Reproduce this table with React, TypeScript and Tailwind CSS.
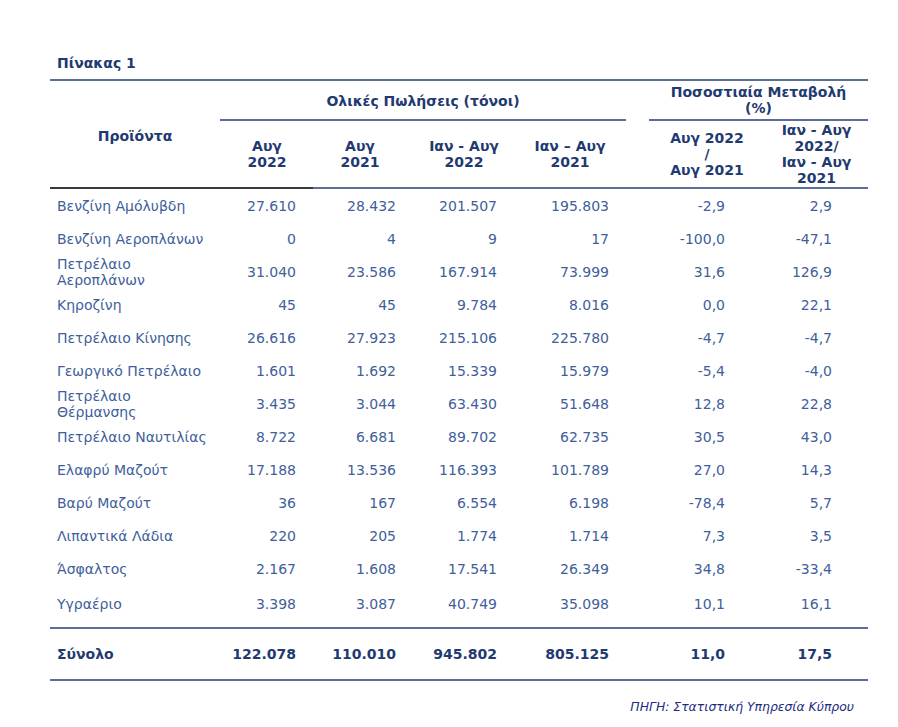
import React from "react";

const rows: { label: string[]; v: string[] }[] = [
  { label: ["Βενζίνη Αμόλυβδη"], v: ["27.610", "28.432", "201.507", "195.803", "-2,9", "2,9"] },
  { label: ["Βενζίνη Αεροπλάνων"], v: ["0", "4", "9", "17", "-100,0", "-47,1"] },
  { label: ["Πετρέλαιο", "Αεροπλάνων"], v: ["31.040", "23.586", "167.914", "73.999", "31,6", "126,9"] },
  { label: ["Κηροζίνη"], v: ["45", "45", "9.784", "8.016", "0,0", "22,1"] },
  { label: ["Πετρέλαιο Κίνησης"], v: ["26.616", "27.923", "215.106", "225.780", "-4,7", "-4,7"] },
  { label: ["Γεωργικό Πετρέλαιο"], v: ["1.601", "1.692", "15.339", "15.979", "-5,4", "-4,0"] },
  { label: ["Πετρέλαιο", "Θέρμανσης"], v: ["3.435", "3.044", "63.430", "51.648", "12,8", "22,8"] },
  { label: ["Πετρέλαιο Ναυτιλίας"], v: ["8.722", "6.681", "89.702", "62.735", "30,5", "43,0"] },
  { label: ["Ελαφρύ Μαζούτ"], v: ["17.188", "13.536", "116.393", "101.789", "27,0", "14,3"] },
  { label: ["Βαρύ Μαζούτ"], v: ["36", "167", "6.554", "6.198", "-78,4", "5,7"] },
  { label: ["Λιπαντικά Λάδια"], v: ["220", "205", "1.774", "1.714", "7,3", "3,5"] },
  { label: ["Άσφαλτος"], v: ["2.167", "1.608", "17.541", "26.349", "34,8", "-33,4"] },
  { label: ["Υγραέριο"], v: ["3.398", "3.087", "40.749", "35.098", "10,1", "16,1"] },
];

const grid = "grid grid-cols-[170px_94px_92px_116px_104px_23px_116px_103px]";

function NumCells({ v }: { v: string[] }) {
  return (
    <>
      <div className="text-right pr-[18px]">{v[0]}</div>
      <div className="text-right pr-[10px]">{v[1]}</div>
      <div className="text-right pr-[25px]">{v[2]}</div>
      <div className="text-right pr-[17px]">{v[3]}</div>
      <div />
      <div className="text-right pr-[40px]">{v[4]}</div>
      <div className="text-right pr-[36px]">{v[5]}</div>
    </>
  );
}

export default function App() {
  return (
    <div
      className="w-[898px] h-[727px] bg-white text-[14px] leading-[16px] text-[#40609a]"
      style={{ fontFamily: '"DejaVu Sans", Verdana, sans-serif' }}
    >
      <div className="ml-[50px] w-[818px] pt-[55px]">
        <div className="pl-[7px] font-bold text-[#1f3a70] h-[16px]">Πίνακας 1</div>
        <div className="mt-[8px] h-[2px] bg-[#5b6f96]" />

        {/* header */}
        <div className={`${grid} grid-rows-[40px_66px] font-bold text-[#1f3a70]`}>
          <div className="row-span-2 text-center pt-[47px]">Προϊόντα</div>
          <div className="col-span-4 flex items-center justify-center border-b-[2px] border-[#5b6f96] pt-[2px]">
            Ολικές Πωλήσεις (τόνοι)
          </div>
          <div />
          <div className="col-span-2 flex flex-col items-center justify-center border-b-[2px] border-[#5b6f96] pt-[2px] pb-[2px]">
            <span>Ποσοστιαία Μεταβολή</span>
            <span>(%)</span>
          </div>
          <div className="flex flex-col items-center justify-center">
            <span>Αυγ</span>
            <span>2022</span>
          </div>
          <div className="flex flex-col items-center justify-center">
            <span>Αυγ</span>
            <span>2021</span>
          </div>
          <div className="flex flex-col items-center justify-center">
            <span>Ιαν - Αυγ</span>
            <span>2022</span>
          </div>
          <div className="flex flex-col items-center justify-center pr-[8px]">
            <span>Ιαν – Αυγ</span>
            <span>2021</span>
          </div>
          <div />
          <div className="flex flex-col items-center justify-center">
            <span>Αυγ 2022</span>
            <span>/</span>
            <span>Αυγ 2021</span>
          </div>
          <div className="flex flex-col items-center justify-center">
            <span>Ιαν - Αυγ</span>
            <span>2022/</span>
            <span>Ιαν - Αυγ</span>
            <span>2021</span>
          </div>
        </div>
        <div className="flex h-[2px]">
          <div className="w-[263px] bg-[#3a3a3a]" />
          <div className="flex-1 bg-[#5b6f96]" />
        </div>

        {/* body */}
        {rows.map((r, i) => (
          <div
            key={i}
            className={`${grid} items-center ${i === rows.length - 1 ? "h-[42px] pb-[4px]" : "h-[33px]"}`}
          >
            <div className="pl-[7px] flex flex-col">
              {r.label.map((l, j) => (
                <span key={j}>{l}</span>
              ))}
            </div>
            <NumCells v={r.v} />
          </div>
        ))}
        <div className="h-[2px] bg-[#5b6f96]" />
        <div className={`${grid} items-center h-[50px] font-bold text-[#1f3a70]`}>
          <div className="pl-[7px]">Σύνολο</div>
          <NumCells v={["122.078", "110.010", "945.802", "805.125", "11,0", "17,5"]} />
        </div>
        <div className="h-[2px] bg-[#5b6f96]" />
        <div className="mt-[19px] text-right pr-[14px] italic text-[12.4px] leading-[14px] text-[#1b2c80]">
          ΠΗΓΗ: Στατιστική Υπηρεσία Κύπρου
        </div>
      </div>
    </div>
  );
}
